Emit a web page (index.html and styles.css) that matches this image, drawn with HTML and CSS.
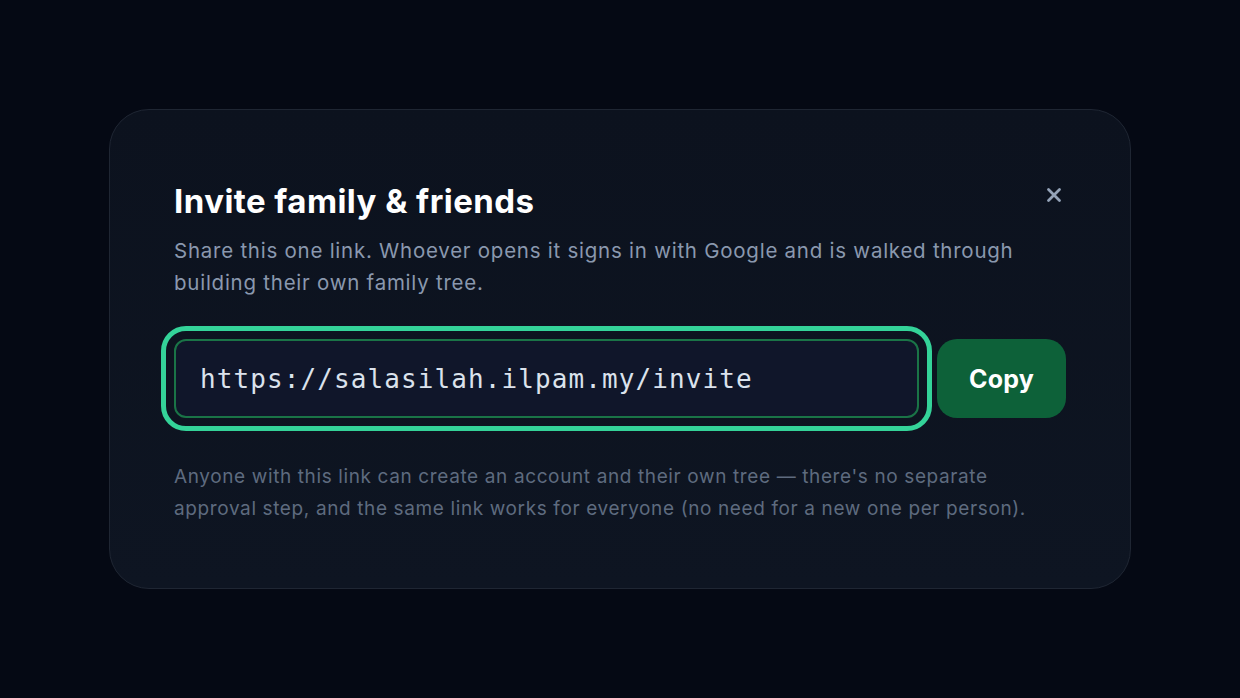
FILE: index.html
```html
<!DOCTYPE html>
<html lang="en">
<head>
<meta charset="utf-8">
<title>Invite family &amp; friends</title>
<link rel="stylesheet" href="styles.css">
</head>
<body>
<div class="card">
  <div class="head">
    <h2 class="title">Invite family &amp; friends</h2>
    <button class="close" aria-label="Close">
      <svg viewBox="0 0 16 16" width="16" height="16"><path d="M2.5 2.5 L13.5 13.5 M13.5 2.5 L2.5 13.5" stroke="#94a3b8" stroke-width="2.8" stroke-linecap="round" fill="none"/></svg>
    </button>
  </div>
  <p class="sub">Share this one link. Whoever opens it signs in with Google and is walked through building their own family tree.</p>
  <div class="row">
    <div class="field">https://salasilah.ilpam.my/invite</div>
    <button class="copy">Copy</button>
  </div>
  <p class="note">Anyone with this link can create an account and their own tree — there's no separate approval step, and the same link works for everyone (no need for a new one per person).</p>
</div>
</body>
</html>
```
FILE: styles.css
```css
html, body {
  margin: 0;
  height: 100%;
}
body {
  background: #050914;
  display: flex;
  align-items: center;
  justify-content: center;
  font-family: Inter, "Noto Sans", sans-serif;
}
.card {
  box-sizing: border-box;
  width: 1022px;
  height: 480px;
  border: 1px solid #1f2633;
  border-radius: 40px;
  background: linear-gradient(180deg, #0c121e 0%, #0e1522 100%);
  padding: 71px 64px 0 64px;
}
.head {
  display: flex;
  justify-content: space-between;
  align-items: flex-start;
}
.title {
  margin: 0;
  font-size: 33px;
  line-height: 40px;
  font-weight: 700;
  color: #ffffff;
  letter-spacing: 0.45px;
}
.close {
  background: none;
  border: 0;
  padding: 0;
  margin: 4px 2px 0 0;
  width: 20px;
  height: 20px;
  display: flex;
  align-items: center;
  justify-content: center;
  cursor: pointer;
}
.sub {
  margin: 14px 0 0;
  font-size: 20.5px;
  line-height: 32px;
  letter-spacing: 0.75px;
  color: #8a98ae;
  max-width: 860px;
}
.row {
  display: flex;
  gap: 18px;
  margin-top: 40px;
}
.field {
  flex: 1;
  box-sizing: border-box;
  height: 79px;
  border: 2px solid #1a7447;
  border-radius: 12px;
  background: #10162a;
  outline: 5px solid #34d399;
  outline-offset: 8px;
  display: flex;
  align-items: center;
  padding-left: 24px;
  font-family: "DejaVu Sans Mono", monospace;
  font-size: 26px;
  letter-spacing: 1.1px;
  color: #dbe2ec;
}
.copy {
  width: 129px;
  height: 79px;
  border: 0;
  border-radius: 20px;
  background: #0d6139;
  color: #ffffff;
  font-family: Inter, "Noto Sans", sans-serif;
  font-size: 25px;
  font-weight: 700;
  letter-spacing: 0.2px;
  cursor: pointer;
}
.note {
  margin: 43px 0 0;
  font-size: 19px;
  line-height: 32px;
  letter-spacing: 0.62px;
  color: #5e6b7f;
}
```
